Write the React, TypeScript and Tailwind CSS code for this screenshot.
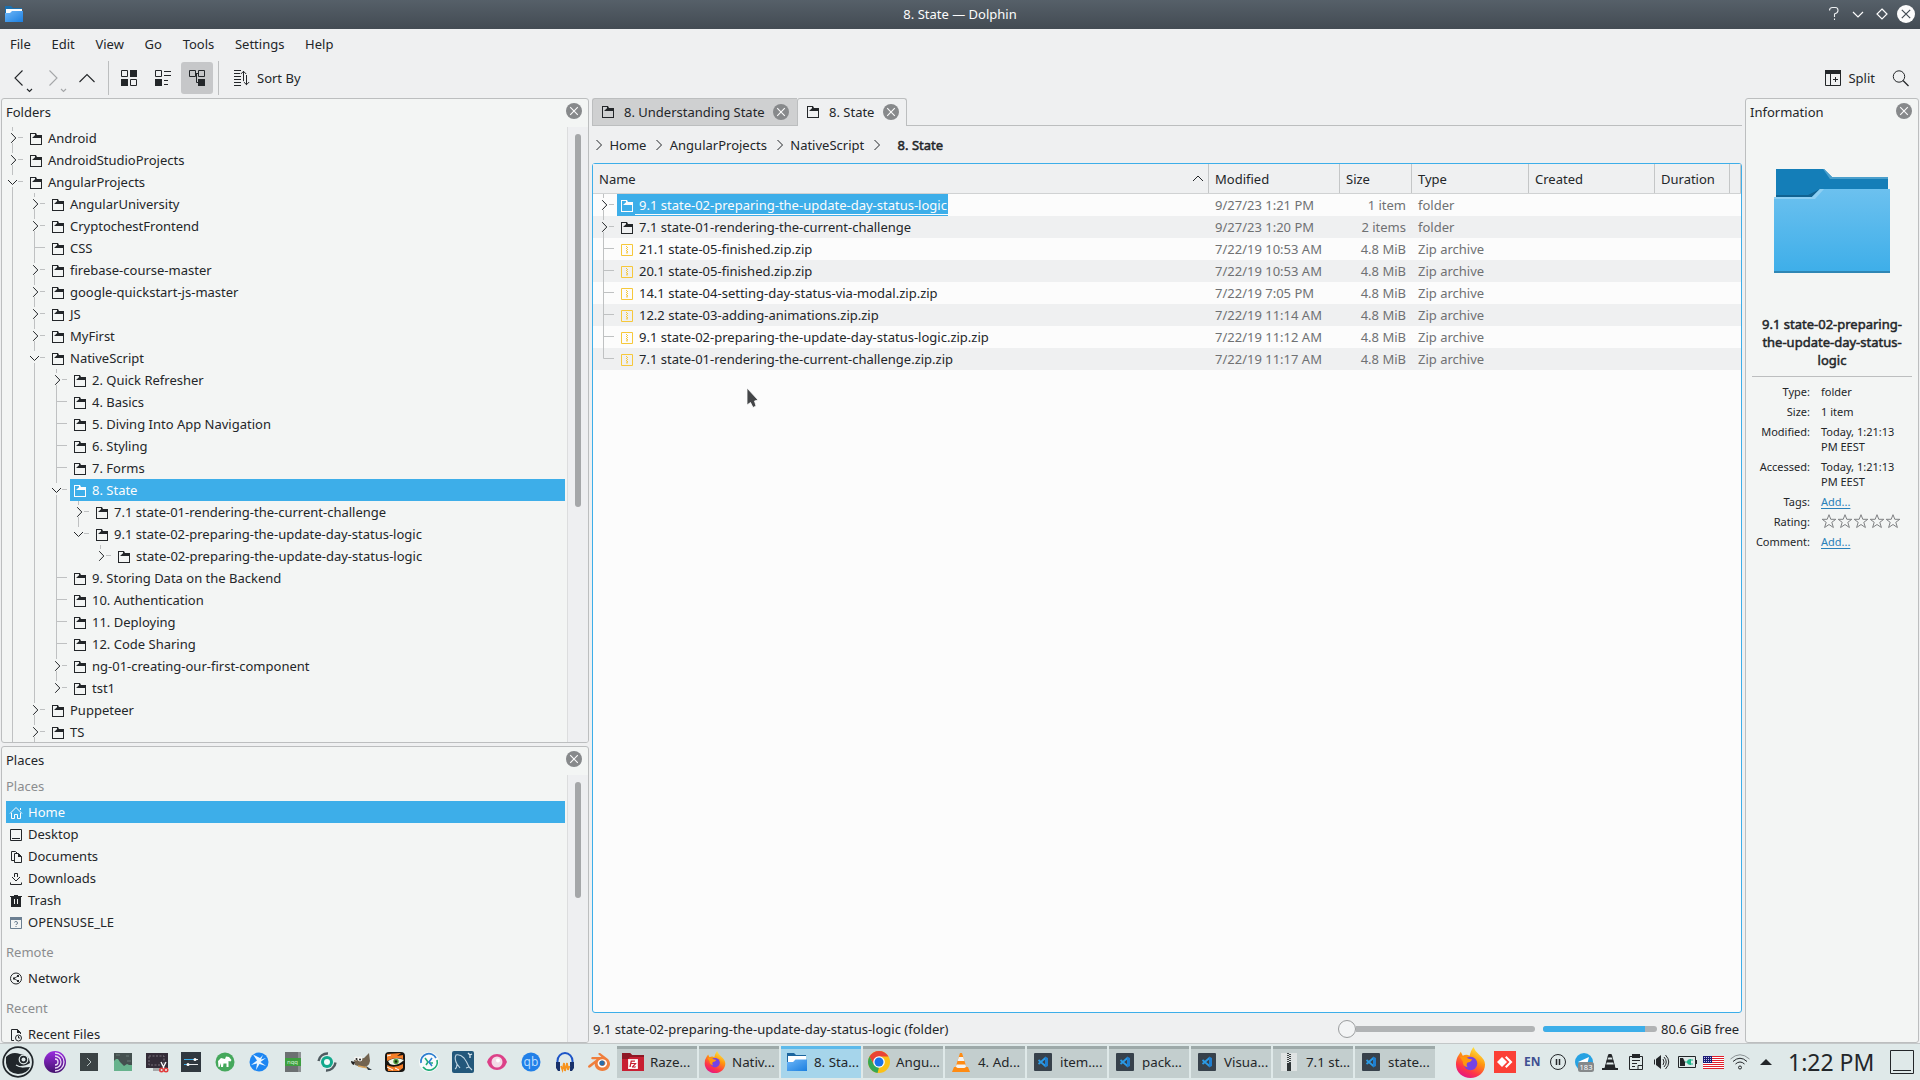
import type { ReactNode } from "react";
import clsx from "clsx";
import { SiBlender, SiFilezilla } from "react-icons/si";

type TreeRow = { cells: string; name: string; selected?: boolean };
type FileRow = {
  cell: string;
  name: string;
  modified: string;
  size: string;
  type: string;
  selected?: boolean;
};

// one character per branch column:
// | passes through, > collapsed, ] collapsed and last, v expanded,
// w expanded and last, + leaf, L leaf and last
const tree: TreeRow[] = [
  { cells: ">", name: "Android" },
  { cells: ">", name: "AndroidStudioProjects" },
  { cells: "v", name: "AngularProjects" },
  { cells: "|>", name: "AngularUniversity" },
  { cells: "|>", name: "CryptochestFrontend" },
  { cells: "|+", name: "CSS" },
  { cells: "|>", name: "firebase-course-master" },
  { cells: "|>", name: "google-quickstart-js-master" },
  { cells: "|>", name: "JS" },
  { cells: "|>", name: "MyFirst" },
  { cells: "|v", name: "NativeScript" },
  { cells: "||>", name: "2. Quick Refresher" },
  { cells: "||+", name: "4. Basics" },
  { cells: "||+", name: "5. Diving Into App Navigation" },
  { cells: "||+", name: "6. Styling" },
  { cells: "||+", name: "7. Forms" },
  { cells: "||v", name: "8. State", selected: true },
  { cells: "|||>", name: "7.1 state-01-rendering-the-current-challenge" },
  { cells: "|||w", name: "9.1 state-02-preparing-the-update-day-status-logic" },
  { cells: "||| ]", name: "state-02-preparing-the-update-day-status-logic" },
  { cells: "||+", name: "9. Storing Data on the Backend" },
  { cells: "||+", name: "10. Authentication" },
  { cells: "||+", name: "11. Deploying" },
  { cells: "||+", name: "12. Code Sharing" },
  { cells: "||>", name: "ng-01-creating-our-first-component" },
  { cells: "||]", name: "tst1" },
  { cells: "|>", name: "Puppeteer" },
  { cells: "|>", name: "TS" },
];

const files: FileRow[] = [
  { cell: ">", name: "9.1 state-02-preparing-the-update-day-status-logic", modified: "9/27/23 1:21 PM", size: "1 item", type: "folder", selected: true },
  { cell: ">", name: "7.1 state-01-rendering-the-current-challenge", modified: "9/27/23 1:20 PM", size: "2 items", type: "folder" },
  { cell: "+", name: "21.1 state-05-finished.zip.zip", modified: "7/22/19 10:53 AM", size: "4.8 MiB", type: "Zip archive" },
  { cell: "+", name: "20.1 state-05-finished.zip.zip", modified: "7/22/19 10:53 AM", size: "4.8 MiB", type: "Zip archive" },
  { cell: "+", name: "14.1 state-04-setting-day-status-via-modal.zip.zip", modified: "7/22/19 7:05 PM", size: "4.8 MiB", type: "Zip archive" },
  { cell: "+", name: "12.2 state-03-adding-animations.zip.zip", modified: "7/22/19 11:14 AM", size: "4.8 MiB", type: "Zip archive" },
  { cell: "+", name: "9.1 state-02-preparing-the-update-day-status-logic.zip.zip", modified: "7/22/19 11:12 AM", size: "4.8 MiB", type: "Zip archive" },
  { cell: "L", name: "7.1 state-01-rendering-the-current-challenge.zip.zip", modified: "7/22/19 11:17 AM", size: "4.8 MiB", type: "Zip archive" },
];

const columns = "grid grid-cols-[616px_131px_72px_117px_126px_75px_1fr]";

function BranchCell({ kind }: { kind: string }) {
  const collapsed = kind === ">" || kind === "]";
  const expanded = kind === "v" || kind === "w";
  return (
    <svg className="h-[22px] w-[22px] shrink-0" viewBox="0 0 22 22" fill="none">
      <g stroke="#bfc1c2">
        {kind === "|" && <path d="M11.5 0V22" />}
        {kind === "+" && <path d="M11.5 0V22M11.5 10.5H22" />}
        {kind === "L" && <path d="M11.5 0V10.5H22" />}
        {(collapsed || expanded) && <path d="M11.5 0V4M17 10.5H22" />}
        {(kind === ">" || kind === "v") && <path d="M11.5 16V22" />}
      </g>
      {collapsed && <path d="M10.2 6.2L14.8 11L10.2 15.8" stroke="#232629" />}
      {expanded && <path d="M7 9L11.5 13.5L16 9" stroke="#232629" />}
    </svg>
  );
}

function FolderIcon({ className }: { className?: string }) {
  return (
    <svg className={clsx("h-4 w-4 shrink-0", className)} viewBox="0 0 16 16">
      <path
        fill="currentColor"
        fillRule="evenodd"
        d="M2 3H8L9 5H14V15H2ZM3 4V8H4L7 5.2V4ZM3 8V14H13V8Z"
      />
    </svg>
  );
}

function ZipIcon() {
  return (
    <svg className="h-4 w-4 shrink-0" viewBox="0 0 16 16" fill="none">
      <path d="M2.5 3.5H13.5V14.5H2.5Z" stroke="#f6c83a" />
      <path d="M7.5 5V10M8.5 6V11" stroke="#f6c83a" strokeDasharray="1 1" />
      <path d="M7 10.5H9V12.5H7Z" fill="#f6c83a" opacity=".7" />
    </svg>
  );
}

function CloseDot() {
  return (
    <svg className="h-4 w-4 shrink-0" viewBox="0 0 16 16">
      <circle cx="8" cy="8" r="8" fill="#87898b" />
      <path d="M4.2 4.2L11.8 11.8M11.8 4.2L4.2 11.8" stroke="#fcfcfc" strokeWidth="1.1" />
    </svg>
  );
}

function TitleBar() {
  return (
    <header className="flex h-[29px] shrink-0 items-center bg-gradient-to-b from-[#566069] to-[#434b53] pb-px text-[#fcfcfc]">
      <div className="w-[120px] pl-1">
        <svg width="20" height="20" viewBox="0 0 20 20">
          <path d="M1 2H7L9 4H18V10H1Z" fill="#1a6fae" />
          <path d="M2 5H18V9H2Z" fill="#f8fbfd" />
          <path d="M1 9H6L8 7H19V18H1Z" fill="url(#dolphin)" />
          <defs>
            <linearGradient id="dolphin" x1="0" y1="0" x2="1" y2="1">
              <stop stopColor="#6db6f7" />
              <stop offset="1" stopColor="#1b7fe0" />
            </linearGradient>
          </defs>
        </svg>
      </div>
      <h1 className="flex-1 text-center">8. State — Dolphin</h1>
      <div className="flex w-[120px] items-center justify-end gap-1.5 pr-[5px]">
        <svg width="18" height="18" viewBox="0 0 18 18" fill="none" stroke="#eef0f2" strokeWidth="1.1">
          <path d="M4.5 5.5Q4.5 2.5 7.5 2.5H10.5Q13 2.5 13 5.5Q13 8 9.5 9V12M9.5 13.5V15" />
        </svg>
        <svg width="18" height="18" viewBox="0 0 18 18" fill="none" stroke="#fcfcfc" strokeWidth="1.2">
          <path d="M4 7L9 12L14 7" />
        </svg>
        <svg width="18" height="18" viewBox="0 0 18 18" fill="none" stroke="#fcfcfc" strokeWidth="1.2">
          <path d="M9 4L14 9L9 14L4 9Z" />
        </svg>
        <svg width="18" height="18" viewBox="0 0 18 18">
          <circle cx="9" cy="9" r="9" fill="#fcfcfc" />
          <path d="M4.8 4.8L13.2 13.2M13.2 4.8L4.8 13.2" stroke="#434b53" strokeWidth="1.2" />
        </svg>
      </div>
    </header>
  );
}

function Toolbar() {
  return (
    <div className="flex h-[39px] shrink-0 items-center pl-[7px] pr-[10px] pb-[2px]">
      <svg width="100" height="32" viewBox="0 0 100 32" fill="none" stroke="#232629" strokeWidth="1.1">
        <path d="M15.5 8.5L8 16L15.5 23.5M20 27L22.5 29.5L25 27" />
        <g stroke="#a4a6a8">
          <path d="M42.5 8.5L50 16L42.5 23.5M54 27L56.5 29.5L59 27" />
        </g>
        <path d="M72.5 20L80 12.5L87.5 20" />
      </svg>
      <div className="ml-px h-[34px] w-px bg-[#bcbebf]" />
      <svg className="ml-[12px]" width="16" height="16" viewBox="0 0 16 16" fill="none" stroke="#232629">
        <path d="M.5 .5H6.5V6.5H.5ZM9.5 9.5H15.5V15.5H9.5Z" />
        <path d="M9 0H16V7H9ZM0 9H7V16H0Z" fill="#232629" stroke="none" />
      </svg>
      <svg className="ml-[18px]" width="16" height="16" viewBox="0 0 16 16" fill="none" stroke="#232629">
        <path d="M.5 .5H6.5V6.5H.5ZM9 1.5H16M9 5.5H16M9 10.5H13M9 14.5H13" />
        <path d="M0 9H7V16H0Z" fill="#232629" stroke="none" />
      </svg>
      <div className="ml-[10px] grid h-8 w-8 place-items-center rounded-[3px] bg-[#c6c7c9]">
        <svg width="16" height="16" viewBox="0 0 16 16" fill="none" stroke="#232629">
          <path d="M.5 .5H6.5V6.5H.5ZM9.5 .5H15.5V6.5H9.5ZM7 3.5H9M7.5 4V12.5H10" />
          <path d="M9 9H16V16H9Z" fill="#232629" stroke="none" />
        </svg>
      </div>
      <div className="ml-[5px] h-[34px] w-px bg-[#bcbebf]" />
      <svg className="ml-[15px]" width="16" height="16" viewBox="0 0 16 16" fill="none" stroke="#232629">
        <path d="M0 .5H7M0 3.5H6M0 6.5H7M0 9.5H7M0 12.5H7M0 15.5H7" />
        <path d="M9.5 11V1M6.8 4L9.5 1.3L12.2 4M12.5 5V15M9.8 12L12.5 14.7L15.2 12" />
      </svg>
      <span className="ml-[7px]">Sort By</span>
      <svg className="ml-auto" width="16" height="16" viewBox="0 0 16 16" fill="none" stroke="#232629">
        <path d="M.5 1V15.5H15.5V1M5.5 4V15M8 9.5H13M10.5 7V12" />
        <path d="M0 0H16V4H0Z" fill="#232629" stroke="none" />
      </svg>
      <span className="ml-[7px]">Split</span>
      <svg className="ml-[17px]" width="18" height="18" viewBox="0 0 18 18" fill="none" stroke="#232629">
        <circle cx="7" cy="7.5" r="5.7" />
        <path d="M11 11.5L16.5 17" strokeWidth="1.3" />
      </svg>
    </div>
  );
}

function PanelHeader({ title }: { title: string }) {
  return (
    <div className="flex h-[28px] shrink-0 items-center justify-between pl-1 pr-[6px]">
      <h2 className="-mt-[2px]">{title}</h2>
      <span className="-mt-1">
        <CloseDot />
      </span>
    </div>
  );
}

function Scrollbar({ thumb }: { thumb: string }) {
  return (
    <div className="flex w-[21px] shrink-0 justify-center border-l border-[#dcddde] bg-[#eeeff1] pt-[7px]">
      <div className={clsx("w-[6px] rounded-full bg-[#a5a7a9]", thumb)} />
    </div>
  );
}

function FoldersPanel() {
  return (
    <section className="flex h-[645px] shrink-0 flex-col overflow-hidden rounded-[3px] border border-[#bcbebf] bg-[#f3f5f4]">
      <PanelHeader title="Folders" />
      <div className="flex min-h-0 flex-1">
        <ul className="-ml-px flex-1 overflow-hidden">
          {tree.map((row) => (
            <li key={row.cells + row.name} className="flex h-[22px] pr-[2px]">
              {row.cells.split("").map((kind, i) => (
                <BranchCell key={i} kind={kind} />
              ))}
              <div
                className={clsx(
                  "ml-[3px] flex flex-1 items-center whitespace-nowrap pl-[2px]",
                  row.selected && "bg-[#3daee9] text-[#fcfcfc]",
                )}
              >
                <FolderIcon />
                <span className="ml-1">{row.name}</span>
              </div>
            </li>
          ))}
        </ul>
        <Scrollbar thumb="h-[373px]" />
      </div>
    </section>
  );
}

const placeIcons: Record<string, ReactNode> = {
  Home: (
    <g fill="none" stroke="currentColor">
      <path d="M2 9.5L8 3.5L14 9.5M3.5 9V14.5H6.5V10.5H9.5V14.5H12.5V9M12.5 4V6" />
    </g>
  ),
  Desktop: (
    <g fill="none" stroke="currentColor">
      <path d="M2.5 3.5H13.5V14.5H2.5ZM4 12.5H12" />
    </g>
  ),
  Documents: (
    <g fill="none" stroke="currentColor">
      <path d="M6 12.5H3.5V3.5H7.5L9 5M6.5 5.5H10.5L13.5 8.5V14.5H6.5Z" />
      <path d="M10 5V9H14Z" fill="currentColor" stroke="none" />
    </g>
  ),
  Downloads: (
    <g fill="none" stroke="currentColor">
      <path d="M6.5 7V3.5H9.5V7M4 7L8 11L12 7M2.5 12.5V14.5H13.5V12.5" />
    </g>
  ),
  Trash: (
    <path
      fill="currentColor"
      fillRule="evenodd"
      d="M2 4H6V3H10V4H14V5H13V15H3V5H2ZM6 7V12H7V7ZM9 7V12H10V7Z"
    />
  ),
  OPENSUSE_LE: (
    <g fill="none" stroke="#6b7f91">
      <path d="M2.5 3.5H13.5V14.5H2.5Z" />
      <path d="M2 3H14V6H2Z" fill="#6b7f91" stroke="none" />
      <path d="M6.5 8.5Q6.5 7.5 8 7.5T9.5 9T8 10.5V11M8 12V13" />
    </g>
  ),
  Network: (
    <g fill="none" stroke="currentColor">
      <circle cx="8" cy="8.5" r="5.5" />
      <path d="M10 6L6 8.5L10 11" strokeWidth=".8" />
      <path d="M5 7.5H7V9.5H5ZM9 5H11V7H9ZM9 10H11V12H9Z" fill="currentColor" stroke="none" />
    </g>
  ),
  "Recent Files": (
    <g fill="none" stroke="currentColor">
      <path d="M6 14.5H3.5V3.5H9.5L12.5 6.5V8" />
      <path d="M9 3V7H13Z" fill="currentColor" stroke="none" />
      <circle cx="10.5" cy="12" r="3" />
      <path d="M10.5 10V12H12" />
    </g>
  ),
};

function PlaceItem({ name, selected }: { name: string; selected?: boolean }) {
  return (
    <li
      className={clsx(
        "ml-1 mr-[2px] flex h-[22px] shrink-0 items-center pl-[2px]",
        selected && "bg-[#3daee9] text-[#fcfcfc]",
      )}
    >
      <svg className="h-4 w-4" viewBox="0 0 16 16">
        {placeIcons[name]}
      </svg>
      <span className="ml-1">{name}</span>
    </li>
  );
}

function PlacesPanel() {
  return (
    <section className="mt-[3px] flex h-[297px] shrink-0 flex-col overflow-hidden rounded-[3px] border border-[#bcbebf] bg-[#f3f5f4]">
      <PanelHeader title="Places" />
      <div className="flex min-h-0 flex-1">
        <ul className="flex flex-1 flex-col overflow-hidden">
          <li className="flex h-[26px] shrink-0 items-start pl-1 pt-[2px] text-[#8b8d8f]">Places</li>
          <PlaceItem name="Home" selected />
          <PlaceItem name="Desktop" />
          <PlaceItem name="Documents" />
          <PlaceItem name="Downloads" />
          <PlaceItem name="Trash" />
          <PlaceItem name="OPENSUSE_LE" />
          <li className="flex h-[34px] shrink-0 items-start pl-1 pt-[10px] text-[#8b8d8f]">Remote</li>
          <PlaceItem name="Network" />
          <li className="flex h-[34px] shrink-0 items-start pl-1 pt-[10px] text-[#8b8d8f]">Recent</li>
          <PlaceItem name="Recent Files" />
        </ul>
        <Scrollbar thumb="h-[116px]" />
      </div>
    </section>
  );
}

function Crumb({ children, last }: { children: ReactNode; last?: boolean }) {
  return (
    <span className={clsx("flex items-center", last && "[-webkit-text-stroke:0.5px_#232629]")}>
      <svg
        className={last ? "mr-[16.4px]" : "mr-[6.4px]"}
        width="8"
        height="12"
        viewBox="0 0 8 12"
        fill="none"
        stroke="#232629"
      >
        <path d="M1.5 1L6.5 6L1.5 11" />
      </svg>
      {children}
    </span>
  );
}

function MainView() {
  const headings = ["Name", "Modified", "Size", "Type", "Created", "Duration", ""];
  return (
    <main className="ml-[3px] flex w-[1150px] shrink-0 flex-col">
      <div className="flex h-[28px] shrink-0">
        <div className="flex w-[205px] items-center rounded-tl-[3px] border border-r-0 border-[#bcbebf] bg-[#cfd0d1] pl-[7px] pr-[8px] pb-px">
          <FolderIcon className="-mt-px" />
          <span className="ml-2 flex-1">8. Understanding State</span>
          <CloseDot />
        </div>
        <div className="flex w-[110px] items-center rounded-t-[3px] border border-b-0 border-[#bcbebf] pl-[7px] pr-[7px] pb-[2px]">
          <FolderIcon className="-mt-px" />
          <span className="ml-2 flex-1">8. State</span>
          <CloseDot />
        </div>
        <div className="flex-1 border-b border-[#bcbebf]" />
      </div>
      <nav className="flex h-[37px] shrink-0 items-center gap-[9px] pl-[3px]">
        <Crumb>Home</Crumb>
        <Crumb>AngularProjects</Crumb>
        <Crumb>NativeScript</Crumb>
        <Crumb last>8. State</Crumb>
      </nav>
      <div className="flex h-[850px] shrink-0 flex-col rounded-[3px] border border-[#3daee9] bg-[#fcfcfc]">
        <div className={clsx(columns, "h-[30px] shrink-0 border-b border-[#d0d2d3] bg-[#eff0f1]")}>
          {headings.map((h) => (
            <div key={h} className="flex items-center justify-between border-r border-[#c4c6c7] pl-[6px]">
              {h}
              {h === "Name" && (
                <svg className="mr-1" width="12" height="12" viewBox="0 0 12 12" fill="none" stroke="#232629">
                  <path d="M1 8L6 3L11 8" />
                </svg>
              )}
            </div>
          ))}
        </div>
        {files.map((file, i) => (
          <div
            key={file.name}
            className={clsx(columns, "h-[22px] shrink-0 items-center text-[#6f7173]", i % 2 === 1 && "bg-[#eff0f1]")}
          >
            <div className="-ml-px flex text-[#232629]">
              <BranchCell kind={file.cell} />
              <div
                className={clsx(
                  "ml-[3px] flex h-[22px] items-center whitespace-nowrap pl-[2px]",
                  file.selected && "bg-[#3daee9] text-[#fcfcfc]",
                )}
              >
                {file.type === "folder" ? <FolderIcon /> : <ZipIcon />}
                <span
                  className={clsx(
                    "flex h-[18px] items-center px-px pl-1",
                    file.selected && "mt-[2px] border-b border-[#fcfcfc] pb-[2px]",
                  )}
                >
                  {file.name}
                </span>
              </div>
            </div>
            <div className="pl-[6px]">{file.modified}</div>
            <div className="pr-[6px] text-right">{file.size}</div>
            <div className="pl-[6px]">{file.type}</div>
          </div>
        ))}
      </div>
      <footer className="flex h-[30px] shrink-0 items-center pl-px pb-px pt-[2px]">
        <span className="flex-1">9.1 state-02-preparing-the-update-day-status-logic (folder)</span>
        <div className="flex w-[197px] items-center">
          <span className="z-10 h-[18px] w-[18px] shrink-0 rounded-full border border-[#9a9c9e] bg-[#f3f4f5]" />
          <span className="h-[6px] flex-1 rounded-r-full bg-[#b1b3b5]" />
        </div>
        <div className="ml-2 h-[6px] w-[114px] overflow-hidden rounded-full bg-[#b1b3b5]">
          <div className="h-full w-[102px] bg-[#3daee9]" />
        </div>
        <span className="ml-1 w-[81px] whitespace-nowrap">80.6 GiB free</span>
      </footer>
    </main>
  );
}

function Stars() {
  return (
    <svg width="80" height="15" viewBox="0 0 80 15" fill="none" stroke="#7f8183">
      {[8, 24, 40, 56, 72].map((x) => (
        <path
          key={x}
          d="M0 -6.8L1.8 -2.2H6.8L2.8 .8L4.4 6L0 3L-4.4 6L-2.8 .8L-6.8 -2.2H-1.8Z"
          transform={`translate(${x} 7.5)`}
        />
      ))}
    </svg>
  );
}

function InformationPanel() {
  const link = "text-[#2980b9] underline underline-offset-2";
  const details: [string, ReactNode][] = [
    ["Type:", "folder"],
    ["Size:", "1 item"],
    ["Modified:", <>Today, 1:21:13<br />PM EEST</>],
    ["Accessed:", <>Today, 1:21:13<br />PM EEST</>],
    ["Tags:", <a className={link}>Add...</a>],
    ["Rating:", <Stars />],
    ["Comment:", <a className={link}>Add...</a>],
  ];
  return (
    <aside className="ml-[3px] flex h-[945px] w-[174px] shrink-0 flex-col rounded-[3px] border border-[#bcbebf] bg-[#f3f5f4]">
      <PanelHeader title="Information" />
      <svg className="ml-7 mt-[42px] shrink-0" width="116" height="104" viewBox="0 0 116 104">
        <defs>
          <linearGradient id="front" x1="0" y1="0" x2="0" y2="1">
            <stop stopColor="#6cc1ef" />
            <stop offset="1" stopColor="#3daee9" />
          </linearGradient>
        </defs>
        <path d="M2 0H50L58 8H114V40H2Z" fill="#147eb8" />
        <path d="M50 0L58 8H114V10H56L49 0Z" fill="#4a9fcc" />
        <path d="M2 26H34L46 20L40 29H2Z" fill="#106291" />
        <path d="M0 28H38L46 20H116V104H0Z" fill="url(#front)" />
        <path d="M0 28H38L46 20H50L41 30H0Z" fill="#8dcff3" />
        <path d="M0 102H116V104H0Z" fill="#2f86b4" />
      </svg>
      <h3 className="mt-[42px] text-center leading-[18px] [-webkit-text-stroke:0.5px_#232629]">
        9.1 state-02-preparing-
        <br />
        the-update-day-status-
        <br />
        logic
      </h3>
      <div className="mx-[6px] mt-[7px] h-px shrink-0 bg-[#bcbebf]" />
      <dl className="mt-[7px] grid grid-cols-[64px_1fr] gap-x-[11px] gap-y-[5px] text-[11px] leading-[15px]">
        {details.map(([label, value]) => (
          <div key={label} className="contents">
            <dt className="text-right">{label}</dt>
            <dd>{value}</dd>
          </div>
        ))}
      </dl>
    </aside>
  );
}

function Firefox({ size, id }: { size: number; id: string }) {
  return (
    <svg width={size} height={size} viewBox="0 0 32 32">
      <defs>
        <linearGradient id={id} x1=".8" y1="0" x2=".3" y2="1">
          <stop stopColor="#fff44f" />
          <stop offset=".4" stopColor="#ff980e" />
          <stop offset=".75" stopColor="#ff3647" />
          <stop offset="1" stopColor="#e31587" />
        </linearGradient>
      </defs>
      <path
        d="M19 0Q21 5 25 8Q31 13 31 18C31 26 24 32 16 32C8 32 1 26 1 18Q1 12 4 8L6 5L8 9Q12 7 15 9Q16 4 19 0Z"
        fill={`url(#${id})`}
      />
      <circle cx="16" cy="17" r="7" fill="#7542e5" />
      <path d="M5 10Q10 9 14 12L18 13Q16 16 13 16Q11 18 13 21Q8 20 8 15Z" fill="#ff980e" />
    </svg>
  );
}

function VsCode() {
  return (
    <svg width="20" height="20" viewBox="0 0 20 20">
      <rect x="1" y="1" width="18" height="18" rx="1" fill="#37414b" />
      <path d="M13 5.5L5.5 12M5.5 8L13 14.5" stroke="#2b9be6" strokeWidth="1.8" />
      <path d="M12 4.5L15 6V14L12 15.5Z" fill="#1f7fd0" />
    </svg>
  );
}

function BlueFolder() {
  return (
    <svg width="22" height="22" viewBox="0 0 22 22">
      <path d="M1 2H8L10 4H20V12H1Z" fill="#1c659e" />
      <path d="M2 5H20V12H2Z" fill="#fff" />
      <path d="M1 11H7L9.5 8.5H21V20H1Z" fill="url(#dolphin)" />
    </svg>
  );
}

function Chrome() {
  return (
    <svg width="24" height="24" viewBox="0 0 24 24">
      <circle cx="12" cy="12" r="11" fill="#fbc116" />
      <path d="M2.5 6.5A11 11 0 0 1 21.5 6.5H12L7 15Z" fill="#ea4335" />
      <path d="M2.5 6.5L7 15L12 17.5L10.5 22.9A11 11 0 0 1 2.5 6.5Z" fill="#34a853" />
      <circle cx="12" cy="12" r="5.8" fill="#fff" />
      <circle cx="12" cy="12" r="4.5" fill="#1a73e8" />
    </svg>
  );
}

function Cone() {
  return (
    <svg width="20" height="22" viewBox="0 0 20 22">
      <path d="M9 2H11L16 18H4Z" fill="#ff8b13" />
      <path d="M7.8 6H12.2L13.4 10H6.6ZM5.5 13.5H14.5L15.3 17H4.7Z" fill="#f4f4f4" />
      <path d="M3 16H5Q10 20 15 16H17L19 21H1Z" fill="#ff8b13" />
    </svg>
  );
}

const launchers: ReactNode[] = [
  // tor browser
  <>
    <defs>
      <linearGradient id="tor" x1="0" y1="0" x2="0" y2="1">
        <stop stopColor="#9a2be0" />
        <stop offset="1" stopColor="#45136e" />
      </linearGradient>
    </defs>
    <circle cx="12" cy="12" r="11" fill="url(#tor)" />
    <path
      d="M12 3A9 9 0 0 1 12 21M12 6A6 6 0 0 1 12 18M12 9A3 3 0 0 1 12 15"
      fill="none"
      stroke="#eadcf5"
      strokeWidth="1.3"
    />
  </>,
  // konsole
  <>
    <path d="M3 3H21V21H3Z" fill="#3b4345" />
    <path d="M10 8L14 12L10 16" fill="none" stroke="#b9c4c4" />
  </>,
  // system monitor
  <>
    <path d="M3 3H21V21H3Z" fill="#44504f" />
    <path d="M3 11L5 9H7L9 12L13 16L16 14L18 15H21V21H3Z" fill="#67b38d" />
    <path d="M5 5H9M15 6H18M16 11H20" stroke="#697876" />
  </>,
  // spectacle
  <>
    <path d="M1 3H23V18H1Z" fill="#332c38" />
    <path d="M4 6H19V15H4Z" fill="none" stroke="#8d8791" strokeDasharray="2 1.5" strokeWidth=".8" />
    <path d="M8 18H16V21H8Z" fill="#a6a8aa" />
    <path d="M16 12L19 18M21 12L18 18" stroke="#fff" strokeWidth="1.3" />
    <g fill="none" stroke="#e23b3b" strokeWidth="1.4">
      <circle cx="16.5" cy="20" r="1.8" />
      <circle cx="21" cy="20" r="1.8" />
    </g>
  </>,
  // system settings
  <>
    <path d="M2 2H22V22H2Z" fill="#30383f" />
    <path d="M5 9.5H19M5 14.5H19" stroke="#e7eaec" />
    <path d="M5 9.5H15M5 14.5H9" stroke="#3daee9" />
    <circle cx="16" cy="9.5" r="1.5" fill="#fff" />
    <circle cx="9" cy="14.5" r="1.5" fill="#fff" />
  </>,
  // green disc with a white animal
  <>
    <circle cx="12" cy="12" r="9.5" fill="#45a85c" />
    <path
      d="M5 11L8 8L12 9L13 6.5L16 7L18.5 10L17.5 11.5L15.5 11V17H13.5V13.5H10.5L10 17H8V13L6.5 17H5.5Z"
      fill="#fff"
    />
  </>,
  // blue bird
  <>
    <circle cx="12" cy="12" r="9.5" fill="#1d86f2" />
    <path
      d="M6 4.5L13 8L16 5L14 9.5L19 8L13.5 12L19 16L12.5 14L9 20L10 13.5L4 15L10 10.5Z"
      fill="#e8f5ff"
    />
  </>,
  // notepad
  <>
    <path d="M4 2H20V22H4Z" fill="#6c7072" />
    <path d="M17 2H20V22H17Z" fill="#8c9092" />
    <path d="M4 8H20V16H4Z" fill="#3d9f3f" />
    <text x="11.5" y="14" fontSize="6" textAnchor="middle" fill="#d5f0d3">nqq</text>
  </>,
  // teal ring
  <>
    <path
      d="M3.5 11A9 9 0 0 1 13 3.5M20.5 12.5A9 9 0 0 1 11 20.5"
      fill="none"
      stroke="#505b60"
      strokeWidth="2.4"
    />
    <circle cx="12" cy="12" r="6" fill="#12a98c" />
    <circle cx="12" cy="12" r="3" fill="#f3fbf9" />
  </>,
  // gimp
  <>
    <path d="M5 10L10 9L15 8L20 3L21 11Q20 18 12 17L6 15Z" fill="#736450" />
    <circle cx="7" cy="8.5" r="2" fill="#f6f6f3" />
    <circle cx="11" cy="9" r="2.4" fill="#f6f6f3" />
    <circle cx="7.5" cy="9" r="1" fill="#222" />
    <circle cx="11" cy="9.5" r="1" fill="#222" />
    <path d="M2 11L6 12L5 15Q2 14 2 11Z" fill="#222" />
    <path d="M9 16L19 18" stroke="#d7a35d" strokeWidth="1.5" />
    <path d="M17 16L23 20L19 20Z" fill="#333d44" />
  </>,
  // tiger eye
  <>
    <rect x="2" y="2" width="20" height="20" rx="4" fill="#171512" />
    <path d="M4 4L18 3L14 6L20 5V9Q12 6 4 11ZM4 15Q11 19 20 14V18L16 21H5Z" fill="#f47e28" />
    <path d="M5 11Q12 6 21 10Q14 17 7 14Z" fill="#eff4e7" />
    <circle cx="13" cy="11.5" r="2.7" fill="#4c9a38" />
    <circle cx="13" cy="11.5" r="1.2" fill="#10200e" />
    <path d="M4 17L10 20M12 18L16 20M4 6L8 5" stroke="#fff" />
  </>,
  // remote desktop
  <>
    <circle cx="12" cy="12" r="10" fill="#f9fbfb" />
    <path d="M4 13A8 8 0 0 1 19 8" fill="none" stroke="#2d7fd0" strokeWidth="1.7" />
    <path d="M20 10A8 8 0 0 1 6 17" fill="none" stroke="#20ad78" strokeWidth="1.7" />
    <path d="M8 8L11 12L9 15M12 13H16" fill="none" stroke="#20ad78" strokeWidth="1.6" />
    <path d="M15 8L12 12L15 16" fill="none" stroke="#2d7fd0" strokeWidth="1.6" />
  </>,
  // mysql workbench
  <>
    <rect x="1" y="1" width="22" height="22" rx="2" fill="#23587b" />
    <path
      d="M4 19Q6 18 6 14Q3 9 5 5Q9 4 13 8Q16 12 18 17L21 20M18 17L15 18M6 14L9 18"
      fill="none"
      stroke="#bfd5e2"
      strokeWidth="1.1"
    />
    <path d="M17 3L19 5L21 4M19 5V8" fill="none" stroke="#dbe8ef" strokeWidth="1.3" />
  </>,
  // pink eye
  <>
    <path d="M2 12Q5 4 12 4T22 12Q19 20 12 20T2 12Z" fill="#dc4188" />
    <circle cx="12" cy="12" r="5.5" fill="#f3dbe7" />
    <circle cx="13" cy="10.5" r="2" fill="#fff" />
  </>,
  // qbittorrent
  <>
    <circle cx="12" cy="12" r="9.5" fill="#2180e8" />
    <text x="12" y="15.5" fontSize="12" textAnchor="middle" fill="#b8dcff">qb</text>
  </>,
  // audacity
  <>
    <path d="M4.5 14V11A7.5 8 0 0 1 19.5 11V14" fill="none" stroke="#1d55c7" strokeWidth="2" />
    <path d="M3 12H7V21H5L3 18ZM21 12H17V21H19L21 18Z" fill="#18316a" />
    <path d="M8 16L9.5 20L11 13L12 21L14 13L15 20L16.5 16" fill="none" stroke="#f7941e" strokeWidth="1.7" />
  </>,
  // blender
  <>
    <circle cx="15" cy="13" r="5" fill="#fff" />
    <SiBlender x="1" y="1" size={22} color="#ef7e3c" />
    <circle cx="15" cy="13" r="2.6" fill="#2a6da8" />
  </>,
];

const tasks: { label: string; icon: ReactNode; active?: boolean }[] = [
  {
    label: "Raze...",
    icon: (
      <svg width="24" height="22" viewBox="0 0 24 22">
        <path d="M1 2H9L11 4H23V20H1Z" fill="#c81f32" />
        <path d="M1 2H9L11 4H23V6H9L7 8H1Z" fill="#8e1825" />
        <SiFilezilla x="7" y="8" size={10} color="#fff" />
      </svg>
    ),
  },
  { label: "Nativ...", icon: <Firefox size={22} id="ff-task" /> },
  { label: "8. Sta...", icon: <BlueFolder />, active: true },
  { label: "Angu...", icon: <Chrome /> },
  { label: "4. Ad...", icon: <Cone /> },
  { label: "item....", icon: <VsCode /> },
  { label: "pack...", icon: <VsCode /> },
  { label: "Visua...", icon: <VsCode /> },
  {
    label: "7.1 st...",
    icon: (
      <svg width="20" height="20" viewBox="0 0 20 20">
        <path d="M2 1H18V19H2Z" fill="#dfe3e3" />
        <path d="M9 1V12M11 2V12" stroke="#3c4244" strokeWidth="2" strokeDasharray="1 1" />
        <path d="M8 11H12V19H8Z" fill="#303537" />
      </svg>
    ),
  },
  { label: "state...", icon: <VsCode /> },
];

function Tray() {
  return (
    <div className="flex items-center">
      <span className="ml-[20px]">
        <Firefox size={31} id="ff-tray" />
      </span>
      <svg className="ml-2" width="22" height="22" viewBox="0 0 22 22">
        <path d="M0 0H22V22H0Z" fill="#fb4036" />
        <path d="M3 11L8 6L13 11L8 16Z" fill="#fff" />
        <path d="M11 6.5L12.5 5L18.5 11L12.5 17L11 15.5L15.5 11Z" fill="#fff" />
      </svg>
      <span className="ml-[8px] w-[17px] text-[12px] font-bold text-[#3f5092]">EN</span>
      <svg className="ml-[9px]" width="16" height="16" viewBox="0 0 16 16" fill="none" stroke="#232629">
        <circle cx="8" cy="8" r="7.5" />
        <path d="M6.5 5V11M9.5 5V11" strokeWidth="1.5" />
      </svg>
      <svg className="ml-[8px]" width="22" height="22" viewBox="0 0 22 22">
        <circle cx="10" cy="11" r="9" fill="#27a2e2" />
        <path d="M4 11L15 6L13 14L7 12Z" fill="#fff" />
        <rect x="4" y="11" width="16" height="10" rx="2.5" fill="#85898b" />
        <text x="12" y="18.7" fontSize="7.5" textAnchor="middle" fill="#fff">183</text>
      </svg>
      <svg className="ml-[6px]" width="16" height="16" viewBox="0 0 16 16" fill="#232629">
        <path d="M6.5 0H9.5L10.5 3.5H5.5ZM5 5.5H11L12 8.5H4ZM3.5 10.5H12.5L13.5 14H16V16H0V14H2.5Z" />
        <path d="M6.5 1L3.5 12M9.5 1L12.5 12" stroke="#232629" strokeWidth=".8" />
      </svg>
      <svg className="ml-[11px]" width="14" height="16" viewBox="0 0 14 16" fill="none" stroke="#232629">
        <path d="M.5 2.5H13.5V15.5H.5ZM3 6.5H11M3 9.5H8M3 12.5H6" />
        <path d="M3 0H11V4H3Z" fill="#232629" stroke="none" />
        <path d="M9 15V11.5H13" />
      </svg>
      <svg className="ml-[11px]" width="16" height="16" viewBox="0 0 16 16" fill="none" stroke="#232629">
        <path d="M2 5L7 1V15L2 11Z" fill="#232629" stroke="none" />
        <path d="M.5 5.5V10.5M9 5Q11 8 9 11M10 3Q14.5 8 10 13M11.5 1Q18 8 11.5 15" />
      </svg>
      <svg className="ml-[8px]" width="20" height="14" viewBox="0 0 20 14" fill="none" stroke="#232629">
        <path d="M.5 1.5H17.5V12.5H.5ZM18.5 5V9" />
        <path d="M2 3H5L7 7V11H2Z" fill="#232629" stroke="none" />
        <path d="M7 7H10M12 5H15M12 9H15" stroke="#1cb68b" />
        <path d="M13 4V10Q9 10 9 7T13 4Z" fill="#1cb68b" stroke="none" />
      </svg>
      <svg className="ml-[5px]" width="21" height="13" viewBox="0 0 21 13">
        <path d="M0 0H21V13H0Z" fill="#fff" />
        <path
          d="M0 .5H21M0 2.5H21M0 4.5H21M0 6.5H21M0 8.5H21M0 10.5H21M0 12.5H21"
          stroke="#e01f2c"
        />
        <path d="M0 0H9V7H0Z" fill="#1b1b78" />
        <path d="M1 1.5H9M1 3.5H9M1 5.5H9" stroke="#c7c7e2" strokeDasharray="1 1" />
      </svg>
      <svg className="ml-[6px]" width="20" height="16" viewBox="0 0 20 16" fill="none" stroke="#232629">
        <path d="M.5 5Q10 -3.5 19.5 5" stroke="#8a9093" />
        <path d="M3 7.5Q10 1 17 7.5M5.5 10Q10 6 14.5 10" />
        <circle cx="10" cy="13.5" r="1.5" />
      </svg>
      <svg className="ml-[10px]" width="12" height="6" viewBox="0 0 12 6">
        <path d="M0 6L6 0L12 6Z" fill="#232629" />
      </svg>
      <span className="ml-[16px] w-[86px] whitespace-nowrap text-[23px] leading-none">1:22 PM</span>
      <svg className="ml-[16px]" width="24" height="24" viewBox="0 0 24 24" fill="none" stroke="#232629">
        <path d="M.5 .5H23.5V23.5H.5ZM3 20.5H21" />
      </svg>
    </div>
  );
}

function Taskbar() {
  return (
    <footer className="flex h-[37px] shrink-0 items-center border-t border-[#c3c7c8] bg-[#dfe9e9]">
      <svg className="ml-[2px] shrink-0" width="32" height="32" viewBox="0 0 32 32">
        <circle cx="16" cy="16" r="14.8" fill="none" stroke="#20262a" strokeWidth="1.7" />
        <path d="M4 11Q10 5 18 8Q28 9 28 17Q24 20 18 20Q18 22 28 21Q25 28 16 28Q5 27 4 17Z" fill="#20262a" />
        <circle cx="21.5" cy="13.5" r="4.3" fill="none" stroke="#dfe9e9" strokeWidth="1.2" />
        <circle cx="21.5" cy="13.5" r="2" fill="#dfe9e9" />
        <path d="M14 19Q20 23 28 19" fill="none" stroke="#dfe9e9" strokeWidth="1.2" />
      </svg>
      <div className="ml-[9px] flex w-[574px] shrink-0 gap-[10px]">
        {launchers.map((icon, i) => (
          <svg key={i} className="shrink-0" width="24" height="24" viewBox="0 0 24 24">
            {icon}
          </svg>
        ))}
      </div>
      <div className="flex h-8 gap-[2px]">
        {tasks.map((task, i) => (
          <div
            key={i}
            className={clsx(
              "flex w-[80px] shrink-0 items-center border-t-[3px] pb-[3px] pl-[4px]",
              task.active ? "border-[#5db9ea] bg-[#a6d5eb]" : "border-[#9da9a9] bg-[#c3cece]",
            )}
          >
            <span className="grid w-6 shrink-0 place-items-center">{task.icon}</span>
            <span className="ml-[5px] whitespace-nowrap text-[13.33px]">{task.label}</span>
          </div>
        ))}
      </div>
      <Tray />
    </footer>
  );
}

export default function App() {
  return (
    <div className="relative flex h-[1080px] w-[1920px] flex-col overflow-hidden bg-[#eff0f1] font-['Noto_Sans',sans-serif] text-[13px] leading-[18px] text-[#232629]">
      <TitleBar />
      <nav className="flex h-[30px] shrink-0 items-center gap-[20.7px] pl-[10px]">
        {["File", "Edit", "View", "Go", "Tools", "Settings", "Help"].map((item) => (
          <span key={item}>{item}</span>
        ))}
      </nav>
      <Toolbar />
      <div className="flex h-[945px] shrink-0 pl-px">
        <div className="flex w-[588px] shrink-0 flex-col">
          <FoldersPanel />
          <PlacesPanel />
        </div>
        <MainView />
        <InformationPanel />
      </div>
      <Taskbar />
      <svg className="absolute left-[745px] top-[387px]" width="16" height="22" viewBox="0 0 16 22">
        <path d="M2 1L13 13L9.5 14L11 19L8 20.5L5.5 15.5L2 18Z" fill="#444648" stroke="#fcfcfc" strokeWidth=".8" />
      </svg>
    </div>
  );
}
